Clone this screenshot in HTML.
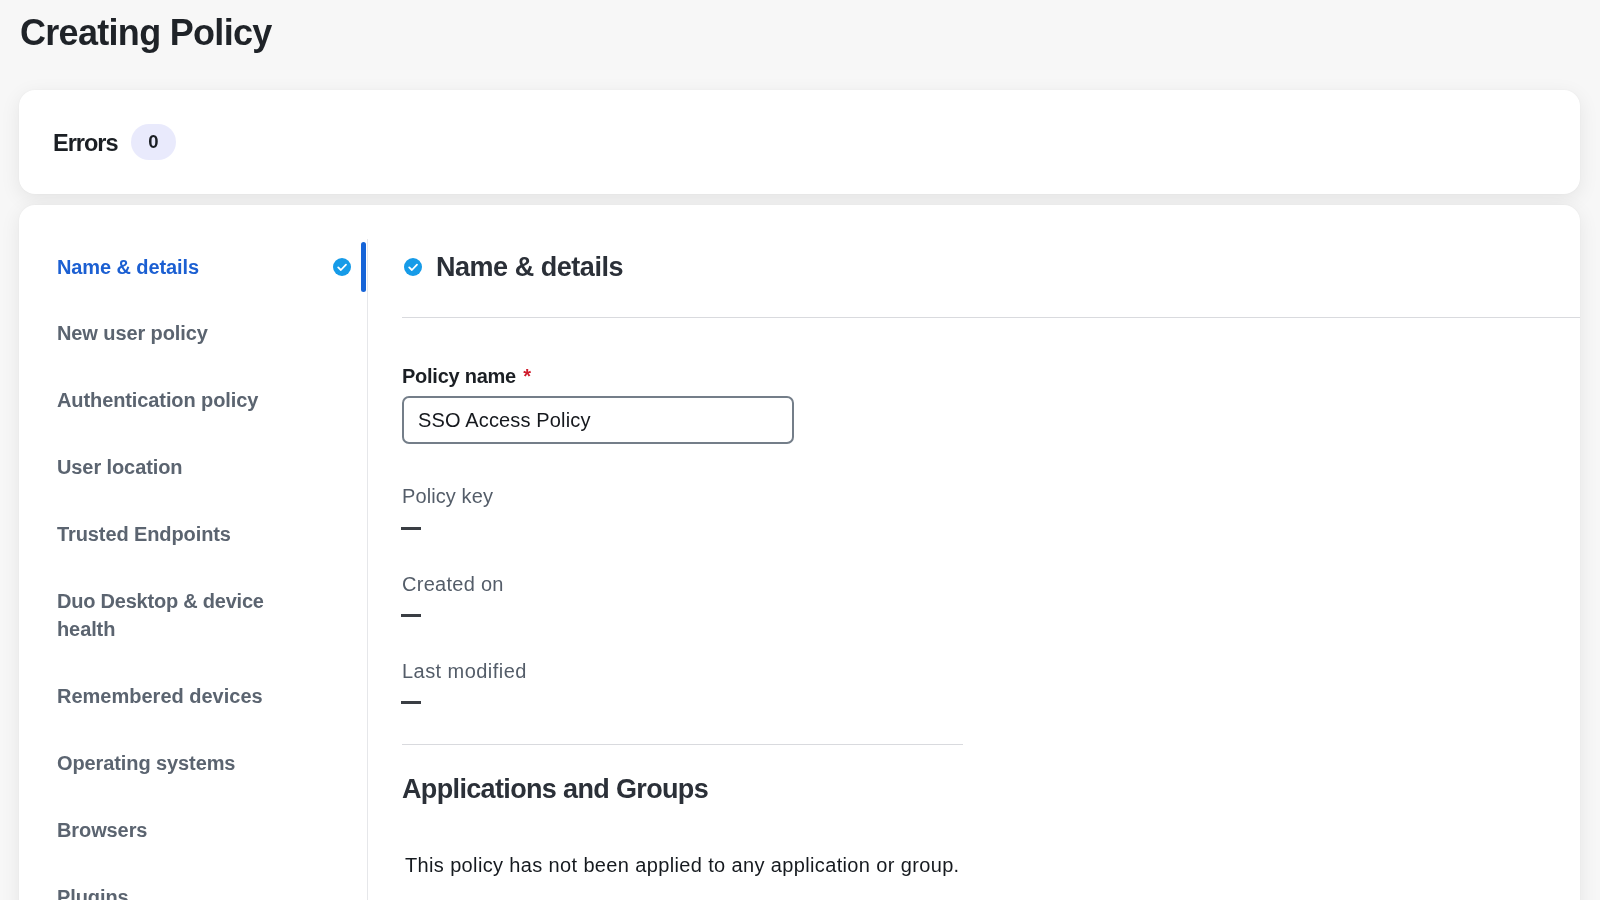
<!DOCTYPE html>
<html>
<head>
<meta charset="utf-8">
<style>
*{margin:0;padding:0;box-sizing:border-box;}
html,body{width:1600px;height:900px;overflow:hidden;}
body{background:#f7f7f7;font-family:"Liberation Sans",sans-serif;-webkit-font-smoothing:antialiased;position:relative;color:#1f2328;}
.abs{position:absolute;white-space:nowrap;line-height:1;will-change:transform;}
.title{left:19.8px;top:11px;font-size:36px;font-weight:bold;letter-spacing:-0.7px;color:#1f2328;}
.card{position:absolute;left:19px;width:1561px;background:#fff;border-radius:16px;box-shadow:0 0 2px rgba(0,0,0,0.04),0 5px 20px rgba(0,0,0,0.08);}
.card1{top:90px;height:104px;}
.card2{top:205px;height:760px;}
.errors{left:53.4px;top:132px;font-size:23.5px;font-weight:bold;color:#1b1f24;letter-spacing:-1px;}
.badge{position:absolute;left:131px;top:124px;width:45px;height:36px;border-radius:18px;background:#e9eafc;}
.badge span{position:absolute;left:0;right:0;top:8.5px;text-align:center;font-size:18.5px;font-weight:bold;color:#1b1f24;line-height:1;will-change:transform;}
.nav{left:57px;font-size:20px;font-weight:bold;color:#5b6470;letter-spacing:-0.1px;}
.nav.active{color:#1b5fd2;}
.vdiv{position:absolute;left:366.5px;top:239px;width:1.3px;height:700px;background:#e6e7ea;}
.bar{position:absolute;left:361.2px;top:241.5px;width:4.7px;height:50.5px;border-radius:2.5px;background:#1664d8;}
.chk{position:absolute;width:18px;height:18px;}
.h2{font-size:27px;font-weight:bold;color:#2b3038;letter-spacing:-0.47px;}
.hdiv{position:absolute;height:1.3px;background:#d9dade;}
.label{left:402px;font-size:20px;font-weight:bold;color:#1b1f24;letter-spacing:-0.25px;}
.req{color:#cf1b2b;}
.input{position:absolute;left:402px;top:396px;width:392px;height:47.5px;border:2px solid #747e89;border-radius:7px;background:#fff;}
.inval{left:417.6px;font-size:20px;color:#15181d;letter-spacing:0.15px;}
.meta{left:402px;font-size:20px;color:#545d69;letter-spacing:0.1px;}
.dash{position:absolute;left:401px;width:20px;height:3px;background:#3a3e44;}
.para{left:404.5px;font-size:20px;color:#161a1f;letter-spacing:0.36px;}
</style>
</head>
<body>
<div class="abs title" style="top:14.5px">Creating Policy</div>

<div class="card card1"></div>
<div class="card card2"></div>

<div class="abs errors">Errors</div>
<div class="badge"><span>0</span></div>

<!-- sidebar -->
<div class="abs nav active" style="top:257px">Name &amp; details</div>
<svg class="chk" style="left:333px;top:257.6px" viewBox="0 0 18 18"><circle cx="9" cy="9" r="9" fill="#169be8"/><path d="M5.2 9.4 L7.9 12.0 L13.0 6.7" fill="none" stroke="#fff" stroke-width="1.8" stroke-linecap="round" stroke-linejoin="round"/></svg>
<div class="bar"></div>
<div class="vdiv"></div>
<div class="abs nav" style="top:323px">New user policy</div>
<div class="abs nav" style="top:390px">Authentication policy</div>
<div class="abs nav" style="top:457px">User location</div>
<div class="abs nav" style="top:524px">Trusted Endpoints</div>
<div class="abs nav" style="top:591px;letter-spacing:-0.22px">Duo Desktop &amp; device</div>
<div class="abs nav" style="top:618.6px">health</div>
<div class="abs nav" style="top:686px;letter-spacing:0px">Remembered devices</div>
<div class="abs nav" style="top:753px">Operating systems</div>
<div class="abs nav" style="top:820px">Browsers</div>
<div class="abs nav" style="top:887px">Plugins</div>

<!-- main -->
<svg class="chk" style="left:404px;top:257.75px" viewBox="0 0 18 18"><circle cx="9" cy="9" r="9" fill="#169be8"/><path d="M5.2 9.4 L7.9 12.0 L13.0 6.7" fill="none" stroke="#fff" stroke-width="1.8" stroke-linecap="round" stroke-linejoin="round"/></svg>
<div class="abs h2" style="left:436px;top:254px">Name &amp; details</div>
<div class="hdiv" style="left:402px;top:317.2px;width:1178px"></div>

<div class="abs label" style="top:366.4px">Policy name <span class="req" style="margin-left:2px">*</span></div>
<div class="input"></div>
<div class="abs inval" style="top:410px">SSO Access Policy</div>

<div class="abs meta" style="top:486px">Policy key</div>
<div class="dash" style="top:527px"></div>
<div class="abs meta" style="top:574.2px;letter-spacing:0.28px">Created on</div>
<div class="dash" style="top:614px"></div>
<div class="abs meta" style="top:661px;letter-spacing:0.45px">Last modified</div>
<div class="dash" style="top:701px"></div>

<div class="hdiv" style="left:402px;top:743.5px;width:561px"></div>
<div class="abs h2" style="left:402px;top:776px;letter-spacing:-0.65px">Applications and Groups</div>
<div class="abs para" style="top:855px">This policy has not been applied to any application or group.</div>
</body>
</html>
